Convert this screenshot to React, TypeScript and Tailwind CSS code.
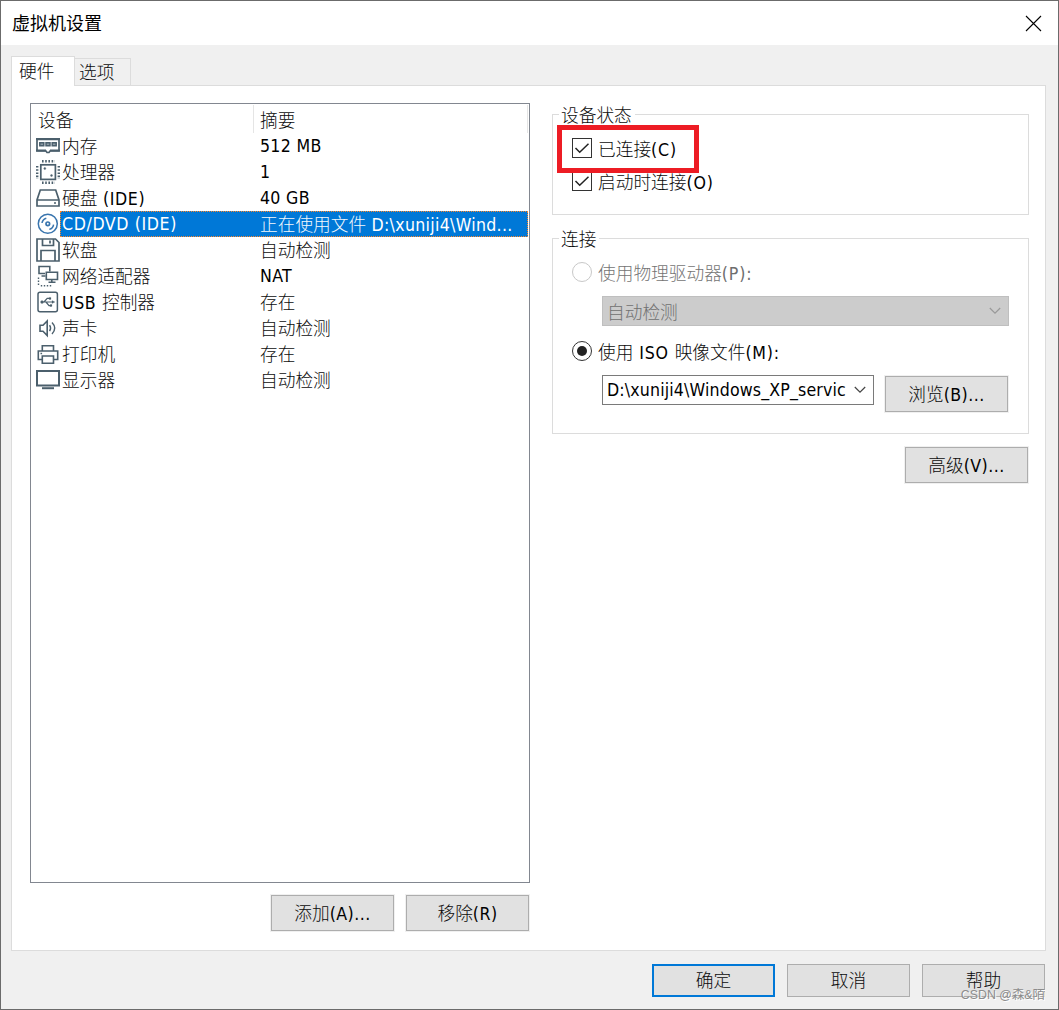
import React from "react";

const CJK = /([\u3400-\u9fff]+)/;

/* Mixed Chinese / Latin label: each script gets its own face. */
function Label({ text, className = "", latin = "tracking-[0.15px]" }: { text: string; className?: string; latin?: string }) {
  return (
    <span className={"inline-block whitespace-pre " + className}>
      {text.split(CJK).map((part, i) =>
        CJK.test(part) ? (
          <span key={i} className="font-['Noto_Sans_CJK_SC',sans-serif] text-[17.7px] font-light opacity-95">
            {part}
          </span>
        ) : (
          <span key={i} className={"font-['DejaVu_Sans_Condensed','DejaVu_Sans',sans-serif] text-[17.6px] [font-stretch:condensed] " + latin}>
            {part}
          </span>
        )
      )}
    </span>
  );
}

function Icon({ children, color = "#4b5f6c" }: { children: React.ReactNode; color?: string }) {
  return (
    <svg width="24" height="26" viewBox="0 0 24 26" fill="none" stroke={color} strokeWidth="1.7" className="block shrink-0">
      {children}
    </svg>
  );
}

const MemoryIcon = (
  <Icon>
    <path d="M1 6.5h22v11.5h-9l-1 1.5h-2l-1-1.5H1z" />
    <path d="M0 6h24" strokeWidth="2" />
    <path d="M0 17.5h10M14 17.5h10" strokeWidth="2" />
    <path d="M3.8 9.8h4v3h-4zM10 9.8h4v3h-4zM16.2 9.8h4v3h-4z" strokeWidth="1.5" fill="#8d9aa3" />
  </Icon>
);
const CpuIcon = (
  <Icon>
    <rect x="4.8" y="5.8" width="14.6" height="14.6" />
    <path d="M6 2.2h13M6 23.8h13" strokeWidth="2.6" strokeDasharray="1.6 1.6" />
    <path d="M1.2 7v13M22.8 7v13" strokeWidth="2.4" strokeDasharray="1.6 1.6" />
    <circle cx="8.8" cy="9.5" r="1" fill="#4b5f6c" strokeWidth="0.4" />
    <circle cx="15.5" cy="16.5" r="1" fill="#4b5f6c" strokeWidth="0.4" />
  </Icon>
);
const DiskIcon = (
  <Icon>
    <path d="M4.3 5h15.4L23 15v6H1v-6zM1 15h22" />
    <path d="M18 18h2" />
  </Icon>
);
const CdIcon = (
  <Icon color="#3975ae">
    <circle cx="11.8" cy="12.8" r="9.5" strokeWidth="1.5" />
    <circle cx="11.8" cy="12.8" r="1.8" strokeWidth="1.7" />
    <path d="M6 12a6 6 0 0 1 4.3-4.8M17.6 13.6a6 6 0 0 1-4.3 4.8" strokeWidth="1.5" />
  </Icon>
);
const FloppyIcon = (
  <Icon>
    <path d="M1 2h18.5L23 5.5V24H1z" />
    <path d="M6.5 2v6.5h11V2M14 3.5v3M5 24V13.5h14V24" />
  </Icon>
);
const NetworkIcon = (
  <Icon>
    <path d="M9 10.5H3V3.5h10.8V8.5M5.5 13h4" strokeWidth="1.6" />
    <path d="M10.3 9.3h11.2v7.2H10.3zM15.8 16.5v2.7M12.5 19.3h7" strokeWidth="1.6" />
    <path d="M2.5 14.5v9M4.8 22.8H16" strokeWidth="1.4" strokeDasharray="1.4 1.6" />
  </Icon>
);
const UsbIcon = (
  <Icon>
    <rect x="2" y="3.3" width="19.4" height="19.4" rx="2" strokeWidth="1.5" />
    <path d="M6 13h11M8 13l3.2-3.6h2M10 13l3 3.6h2" strokeWidth="1.2" />
    <circle cx="6" cy="13" r="1.5" fill="#4b5f6c" strokeWidth="0.2" />
    <path d="M16 11.5l3 1.5-3 1.5z" fill="#4b5f6c" strokeWidth="0.2" />
    <path d="M13 8.4h2v2h-2zM14 15.4h2v2h-2z" fill="#4b5f6c" strokeWidth="0.2" />
  </Icon>
);
const SoundIcon = (
  <Icon>
    <path d="M4 10.3h3L11.2 6v14.5L7 16.2H4z" strokeWidth="1.6" />
    <path d="M13.6 10.2q2 3 0 6M16 7.5q5.5 5.7 0 11.4" strokeWidth="1.4" />
  </Icon>
);
const PrinterIcon = (
  <Icon>
    <path d="M6.3 10V4.8h11.2V10M6.3 18.5H2.3V10h19.4v8.5h-4.2" strokeWidth="1.6" />
    <path d="M6.3 15h11.2v7.3H6.3zM4.5 12.5h1.6" strokeWidth="1.6" />
  </Icon>
);
const DisplayIcon = (
  <Icon>
    <path d="M1 4h22v14.5H1z" strokeWidth="2" />
    <path d="M6 21.2h12" strokeWidth="2" />
  </Icon>
);

const devices = [
  { icon: MemoryIcon, name: "内存", summary: "512 MB" },
  { icon: CpuIcon, name: "处理器", summary: "1" },
  { icon: DiskIcon, name: "硬盘 (IDE)", summary: "40 GB" },
  { icon: CdIcon, name: "CD/DVD (IDE)", summary: "正在使用文件 D:\\xuniji4\\Wind...", selected: true },
  { icon: FloppyIcon, name: "软盘", summary: "自动检测" },
  { icon: NetworkIcon, name: "网络适配器", summary: "NAT" },
  { icon: UsbIcon, name: "USB 控制器", summary: "存在" },
  { icon: SoundIcon, name: "声卡", summary: "自动检测" },
  { icon: PrinterIcon, name: "打印机", summary: "存在" },
  { icon: DisplayIcon, name: "显示器", summary: "自动检测" },
];

function Button({
  text,
  className = "h-9 border border-[#adadad] pt-[2px] outline outline-[#f0f0f0]",
}: {
  text: string;
  className?: string;
}) {
  return (
    <button className={"flex w-[123px] shrink-0 items-center justify-center bg-[#e1e1e1] leading-none " + className}>
      <Label text={text} latin="tracking-[0.45px]" />
    </button>
  );
}

function Check({ text }: { text: string }) {
  return (
    <label className="flex h-5 items-center gap-[6px]">
      <span className="flex size-5 items-center justify-center border border-[#333] bg-white">
        <svg width="16" height="16" viewBox="0 0 16 16" fill="none" stroke="#222" strokeWidth="1.5">
          <path d="M1.5 8l4.2 4.2L14.5 3.8" />
        </svg>
      </span>
      <Label text={text} latin="tracking-[0.8px]" className="pt-[2px]" />
    </label>
  );
}

function Radio({ text, checked = false }: { text: string; checked?: boolean }) {
  return (
    <label className={"flex h-5 items-center gap-[6px] " + (checked ? "text-black" : "text-[#6d6d6d]")}>
      <span className={"flex size-5 items-center justify-center rounded-full border " + (checked ? "border-[#333]" : "border-[#c8c8c8]")}>
        {checked && <span className="size-[10px] rounded-full bg-[#222]" />}
      </span>
      <Label text={text} latin="tracking-[0.8px]" className="pt-[2px]" />
    </label>
  );
}

function Chevron({ color }: { color: string }) {
  return (
    <svg width="12" height="8" viewBox="0 0 12 8" fill="none" stroke={color} strokeWidth="1.2" className="shrink-0">
      <path d="M0.8 1l5.2 5.2L11.2 1" />
    </svg>
  );
}

function Group({ title, className, children }: { title: string; className: string; children: React.ReactNode }) {
  return (
    <section className={"relative w-[477px] border border-[#dcdcdc] " + className}>
      <h2 className="absolute -top-3 left-[6px] flex h-6 items-center bg-white pl-[2px] pr-[3px]">
        <Label text={title} />
      </h2>
      {children}
    </section>
  );
}

export default function App() {
  return (
    <div className="relative flex h-[1010px] w-[1059px] flex-col overflow-hidden border border-[#6b6b6b] bg-[#f0f0f0] text-black">
      <header className="flex h-11 shrink-0 items-center justify-between bg-white pl-[11px] pr-4">
        <h1 className="pb-[3px] font-['Noto_Sans_CJK_SC',sans-serif] text-[18px] leading-none">虚拟机设置</h1>
        <svg width="17" height="17" viewBox="0 0 17 17" stroke="#000" strokeWidth="1.1">
          <path d="M1 1l15 15M16 1L1 16" />
        </svg>
      </header>

      <nav className="z-10 -mb-px ml-[10px] mt-[11px] flex h-[30px] shrink-0 items-end">
        <div className="flex h-[30px] w-[64px] items-center border border-b-0 border-[#dcdcdc] bg-white pb-px pl-[7px]">
          <Label text="硬件" />
        </div>
        <div className="-ml-px flex h-7 w-[57px] items-center border border-[#dcdcdc] pl-1">
          <Label text="选项" />
        </div>
      </nav>

      <main className="mx-[10px] mr-3 flex h-[866px] w-[1035px] shrink-0 border border-[#dcdcdc] bg-white">
        <div className="ml-[18px] mt-[17px] w-[500px]">
          <div className="h-[780px] border border-[#828790]">
            <div className="flex h-[29px] items-center">
              <div className="w-[222px] pl-[7px] pt-[3px]">
                <Label text="设备" />
              </div>
              <div className="flex h-[28px] w-[275px] items-center border-x border-[#e5e5e5] pl-[6px] pt-[3px]">
                <Label text="摘要" />
              </div>
            </div>
            {devices.map((d) => (
              <div key={d.name} className="flex h-[26px] items-center pl-[5px] pr-px">
                {d.icon}
                <div
                  className={
                    "flex h-[26px] flex-1 items-center pt-[2px] " +
                    (d.selected ? "bg-[#0078d7] text-white outline-1 -outline-offset-1 outline-dotted outline-[#ff8728]" : "")
                  }
                >
                  <div className="w-[200px] pl-[2px] leading-none">
                    <Label text={d.name} latin="tracking-[0.6px]" />
                  </div>
                  <Label text={d.summary} className="leading-none" latin="tracking-[0.3px]" />
                </div>
              </div>
            ))}
          </div>
          <div className="mt-3 flex justify-end gap-3 pr-px">
            <Button text="添加(A)..." />
            <Button text="移除(R)" />
          </div>
        </div>

        <div className="ml-[22px] mt-7 w-[477px]">
          <Group title="设备状态" className="h-[101px] pl-[19px] pt-[23px]">
            <div className="flex flex-col gap-[13px]">
              <Check text="已连接(C)" />
              <Check text="启动时连接(O)" />
            </div>
            <div className="absolute left-1 top-[10px] h-12 w-[142px] border-[5px] border-[#ed1c24]" />
          </Group>

          <Group title="连接" className="mt-[23px] h-[196px] pl-[19px] pt-[23px]">
            <Radio text="使用物理驱动器(P):" />
            <div className="ml-[30px] mt-[14px] flex h-[30px] w-[407px] items-center justify-between border border-[#bfbfbf] bg-[#ccc] pl-1 pr-[7px] text-[#6d6d6d]">
              <Label text="自动检测" className="pt-[2px]" />
              <Chevron color="#999" />
            </div>
            <div className="mt-[15px]">
              <Radio text="使用 ISO 映像文件(M):" checked />
            </div>
            <div className="ml-[30px] mt-[14px] flex gap-[11px]">
              <div className="flex h-[30px] w-[272px] items-center justify-between border border-[#7a7a7a] pl-[4px] pr-[7px]">
                <Label text={"D:\\xuniji4\\Windows_XP_servic"} />
                <Chevron color="#444" />
              </div>
              <div className="pt-px">
                <Button text="浏览(B)..." />
              </div>
            </div>
          </Group>

          <div className="mt-[13px] flex justify-end pr-px">
            <Button text="高级(V)..." />
          </div>
        </div>
      </main>

      <footer className="mt-[13px] flex justify-end gap-3 pr-[13px]">
        <Button text="确定" className="h-[33px] border-2 border-[#0078d7]" />
        <Button text="取消" className="h-[33px] border border-[#adadad]" />
        <Button text="帮助" className="h-[33px] border border-[#adadad]" />
      </footer>
      <span className="absolute bottom-[6px] right-[13px] whitespace-nowrap font-['Liberation_Sans','Noto_Sans_CJK_SC',sans-serif] text-[12.4px] leading-4 text-[#8c8c8c] [text-shadow:1px_1px_0_#fff]">
        CSDN @森&amp;陌
      </span>
    </div>
  );
}
